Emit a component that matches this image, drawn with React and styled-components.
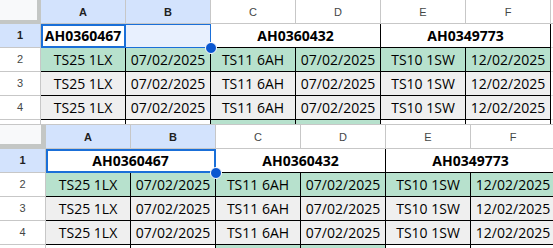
import React from "react"
import styled, { createGlobalStyle } from "styled-components"

const GlobalStyle = createGlobalStyle`
  html, body {
    margin: 0;
    padding: 0;
    background: #ffffff;
  }
  body {
    width: 553px;
    height: 248px;
    overflow: hidden;
  }
`

const Page = styled.div`
  width: 553px;
  height: 248px;
  overflow: hidden;
  display: flex;
  flex-direction: column;
`

const Sheet = styled.div`
  flex: none;
  box-sizing: border-box;
  height: 124px;
  overflow: hidden;
  display: grid;
  grid-template-columns: ${p => p.$rowHead}px repeat(7, 85px);
  grid-template-rows: 24px repeat(5, 24px);
  border-top: ${p => (p.$rule ? "1px solid #c7c7c7" : "none")};
`

const Corner = styled.div`
  background: #f8f9fa;
  box-shadow: inset -${p => p.$bar}px -${p => p.$bar}px 0 #c4c7c5;
`

const ColHead = styled.div`
  box-sizing: border-box;
  display: flex;
  align-items: center;
  justify-content: center;
  border-right: 1px solid #c7c7c7;
  border-bottom: 1px solid #c7c7c7;
  background: ${p => (p.$on ? "#d3e3fd" : "#ffffff")};
  color: ${p => (p.$on ? "#1f1f1f" : "#444746")};
  font-family: "Liberation Sans", Arial, sans-serif;
  font-size: 11px;
  font-weight: ${p => (p.$on ? 700 : 400)};
`

const RowHead = styled(ColHead)`
  padding-bottom: 1px;
`

const Cell = styled.div`
  position: relative;
  box-sizing: border-box;
  grid-column: span ${p => p.$span || 1};
  display: flex;
  align-items: center;
  justify-content: center;
  white-space: nowrap;
  border-right: 1px solid ${p => p.$grid || "#000000"};
  border-bottom: 1px solid ${p => p.$grid || "#000000"};
  background: ${p => p.$fill || "#ffffff"};
  color: #000000;
  font-family: "Open Sans", "Liberation Sans", sans-serif;
  font-size: 14px;
  font-weight: ${p => (p.$bold ? 700 : 400)};
  z-index: ${p => (p.$raise ? 2 : 0)};
`

const ActiveFrame = styled.div`
  position: absolute;
  top: 0;
  left: 0;
  right: -1px;
  bottom: -1px;
  border: 2px solid #1a6fd8;
  pointer-events: none;
`

const RangeFrame = styled.div`
  position: absolute;
  top: 0;
  left: -1px;
  right: -1px;
  bottom: -1px;
  border: 1px solid #1a6fd8;
  border-left: none;
  pointer-events: none;
`

const Handle = styled.div`
  position: absolute;
  right: -7px;
  bottom: -7px;
  width: 10px;
  height: 10px;
  border-radius: 50%;
  background: #0b57d0;
  border: 1px solid #ffffff;
  z-index: 3;
`

const GREEN = "#b7e1cd"
const GRAY = "#efefef"

const letters = ["A", "B", "C", "D", "E", "F", ""]
const values = ["TS25 1LX", "07/02/2025", "TS11 6AH", "07/02/2025", "TS10 1SW", "12/02/2025"]
// row 5 is only a sliver at the bottom edge, so it carries no label or text
const bodyRows = [
  { n: 2, label: "2", fills: [GREEN, GREEN, GREEN, GREEN, GREEN, GREEN], text: true },
  { n: 3, label: "3", fills: [GRAY, GRAY, GRAY, GRAY, GRAY, GRAY], text: true },
  { n: 4, label: "4", fills: [GRAY, GRAY, GRAY, GRAY, GRAY, GRAY], text: true },
  { n: 5, label: "", fills: ["#fff", "#fff", GREEN, GREEN, "#fff", "#fff"], text: false },
]

const Body = () =>
  bodyRows.map(row => (
    <React.Fragment key={row.n}>
      <RowHead>{row.label}</RowHead>
      {row.fills.map((fill, i) => (
        <Cell key={i} $fill={fill}>
          {row.text ? values[i] : ""}
        </Cell>
      ))}
      <Cell $grid="#e1e1e1" />
    </React.Fragment>
  ))

const Headers = ({ bar }) => (
  <>
    <Corner $bar={bar} />
    {letters.map((l, i) => (
      <ColHead key={i} $on={i < 2}>
        {l}
      </ColHead>
    ))}
  </>
)

const App = () => (
  <Page>
    <GlobalStyle />
    <Sheet $rowHead={41}>
      <Headers bar={4} />
      <RowHead $on>1</RowHead>
      <Cell $bold $raise>
        AH0360467
        <ActiveFrame />
      </Cell>
      <Cell $fill="#e8f0fe" $raise>
        <RangeFrame />
        <Handle />
      </Cell>
      <Cell $span={2} $bold>AH0360432</Cell>
      <Cell $span={2} $bold>AH0349773</Cell>
      <Cell $grid="#e1e1e1" />
      <Body />
    </Sheet>
    <Sheet $rowHead={46} $rule>
      <Headers bar={5} />
      <RowHead $on>1</RowHead>
      <Cell $span={2} $bold $raise>
        AH0360467
        <ActiveFrame />
        <Handle />
      </Cell>
      <Cell $span={2} $bold>AH0360432</Cell>
      <Cell $span={2} $bold>AH0349773</Cell>
      <Cell $grid="#e1e1e1" />
      <Body />
    </Sheet>
  </Page>
)

export default App
